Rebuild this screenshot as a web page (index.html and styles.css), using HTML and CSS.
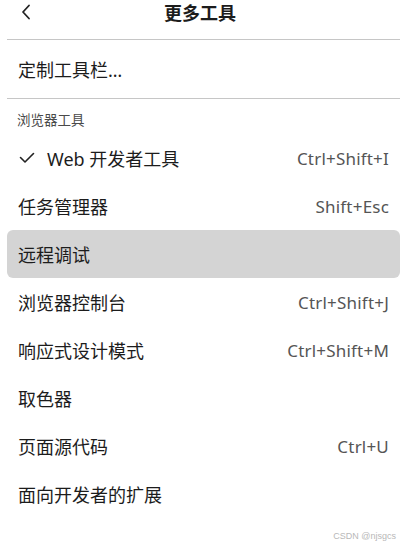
FILE: index.html
```html
<!DOCTYPE html>
<html lang="zh">
<head>
<meta charset="utf-8">
<link rel="stylesheet" href="styles.css">
</head>
<body>
<div class="panel">
  <header class="topbar">
    <svg class="back" width="12" height="16" viewBox="0 0 12 16"><path d="M9 1.5 L3 8 L9 14.5" fill="none" stroke="#222" stroke-width="1.8" stroke-linecap="round" stroke-linejoin="round"/></svg>
    <h1 class="title">更多工具</h1>
  </header>
  <div class="item customize"><span class="label">定制工具栏…</span></div>
  <div class="section">浏览器工具</div>
  <ul class="menu">
    <li class="item"><span class="label"><svg class="check" width="16" height="12" viewBox="0 0 16 12"><path d="M1.5 5.5 L6 10 L14.5 1.5" fill="none" stroke="#222" stroke-width="1.6" stroke-linecap="round" stroke-linejoin="round"/></svg>Web 开发者工具</span><span class="key">Ctrl+Shift+I</span></li>
    <li class="item"><span class="label">任务管理器</span><span class="key">Shift+Esc</span></li>
    <li class="item active"><span class="label">远程调试</span></li>
    <li class="item"><span class="label">浏览器控制台</span><span class="key">Ctrl+Shift+J</span></li>
    <li class="item"><span class="label">响应式设计模式</span><span class="key">Ctrl+Shift+M</span></li>
    <li class="item"><span class="label">取色器</span></li>
    <li class="item"><span class="label">页面源代码</span><span class="key">Ctrl+U</span></li>
    <li class="item"><span class="label">面向开发者的扩展</span></li>
  </ul>
  <div class="watermark">CSDN @njsgcs</div>
</div>
</body>
</html>
```

FILE: styles.css
```css
* { box-sizing: border-box; }
html, body {
  margin: 0;
  padding: 0;
  background: #ffffff;
}
body {
  font-family: "Noto Sans", "Noto Sans CJK SC", sans-serif;
  color: #1c1c1c;
  width: 400px;
  height: 548px;
  overflow: hidden;
}
.panel {
  display: flex;
  flex-direction: column;
  height: 548px;
}
.topbar {
  position: relative;
  height: 40px;
  margin-left: 7px;
  border-bottom: 1px solid #c6c6c6;
  display: flex;
  justify-content: center;
}
.back {
  position: absolute;
  left: 13px;
  top: 4px;
}
.title {
  margin: 0;
  font-size: 18px;
  font-weight: 700;
  line-height: 26px;
  margin-left: -7px;
}
.item {
  display: flex;
  align-items: center;
  justify-content: space-between;
  height: 48px;
  padding: 0 11px 0 11px;
  margin-left: 7px;
  font-size: 18px;
}
.customize {
  height: 59px;
  border-bottom: 1px solid #c6c6c6;
  padding-bottom: 1px;
}
.section {
  height: 35px;
  padding: 10px 0 0 17px;
  font-size: 13.5px;
  color: #4a4a4a;
}
.menu {
  list-style: none;
  margin: 0;
  padding: 0;
}
.label {
  display: flex;
  align-items: center;
}
.check {
  margin-right: 12px;
  margin-left: 1px;
}
.key {
  color: #555555;
  font-size: 17px;
  letter-spacing: 0.2px;
}
.active {
  background: #d4d4d4;
  border-radius: 6px;
}
.watermark {
  margin-top: auto;
  align-self: flex-end;
  font-size: 9px;
  color: #b8b8b8;
  padding: 0 4px 7px 0;
  font-family: "Liberation Sans", sans-serif;
}
```
